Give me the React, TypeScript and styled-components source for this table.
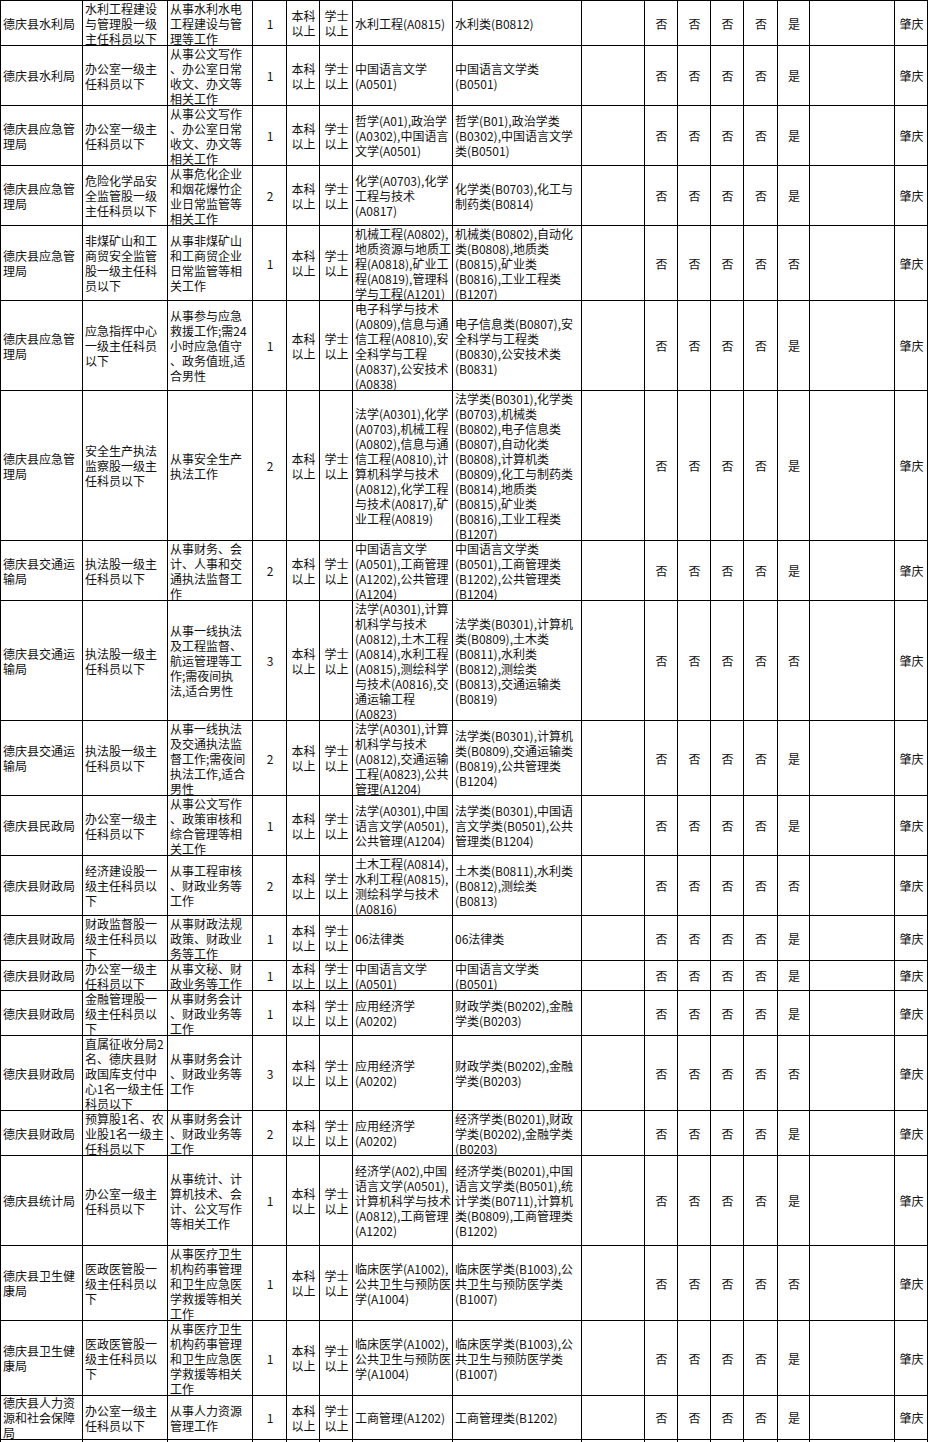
import React from "react";
import styled, { createGlobalStyle } from "styled-components";

const GlobalStyle = createGlobalStyle`
  html, body {
    margin: 0;
    padding: 0;
    background: #fff;
  }
  body {
    font-family: "Noto Sans CJK SC", "Noto Sans", sans-serif;
    color: #111;
  }
`;

// column widths include each cell's right border
const COLS = [82, 85, 85, 34, 33, 33, 100, 129, 63, 33, 33, 33, 34, 32, 85, 33];

interface Job {
  h: number;
  dept: string;
  post: string;
  duty: string;
  count: number;
  major: string;
  bachelor: string;
  flags: string;
}

const jobs: Job[] = [
  {
    h: 45,
    dept: "德庆县水利局",
    post: "水利工程建设|与管理股一级|主任科员以下",
    duty: "从事水利水电|工程建设与管|理等工作",
    count: 1,
    major: "水利工程(A0815)",
    bachelor: "水利类(B0812)",
    flags: "否否否否是",
  },
  {
    h: 60,
    dept: "德庆县水利局",
    post: "办公室一级主|任科员以下",
    duty: "从事公文写作|、办公室日常|收文、办文等|相关工作",
    count: 1,
    major: "中国语言文学|(A0501)",
    bachelor: "中国语言文学类|(B0501)",
    flags: "否否否否是",
  },
  {
    h: 60,
    dept: "德庆县应急管|理局",
    post: "办公室一级主|任科员以下",
    duty: "从事公文写作|、办公室日常|收文、办文等|相关工作",
    count: 1,
    major: "哲学(A01),政治学|(A0302),中国语言|文学(A0501)",
    bachelor: "哲学(B01),政治学类|(B0302),中国语言文学|类(B0501)",
    flags: "否否否否是",
  },
  {
    h: 60,
    dept: "德庆县应急管|理局",
    post: "危险化学品安|全监管股一级|主任科员以下",
    duty: "从事危化企业|和烟花爆竹企|业日常监管等|相关工作",
    count: 2,
    major: "化学(A0703),化学|工程与技术|(A0817)",
    bachelor: "化学类(B0703),化工与|制药类(B0814)",
    flags: "否否否否是",
  },
  {
    h: 75,
    dept: "德庆县应急管|理局",
    post: "非煤矿山和工|商贸安全监管|股一级主任科|员以下",
    duty: "从事非煤矿山|和工商贸企业|日常监管等相|关工作",
    count: 1,
    major: "机械工程(A0802),|地质资源与地质工|程(A0818),矿业工|程(A0819),管理科|学与工程(A1201)",
    bachelor: "机械类(B0802),自动化|类(B0808),地质类|(B0815),矿业类|(B0816),工业工程类|(B1207)",
    flags: "否否否否否",
  },
  {
    h: 90,
    dept: "德庆县应急管|理局",
    post: "应急指挥中心|一级主任科员|以下",
    duty: "从事参与应急|救援工作;需24|小时应急值守|、政务值班,适|合男性",
    count: 1,
    major: "电子科学与技术|(A0809),信息与通|信工程(A0810),安|全科学与工程|(A0837),公安技术|(A0838)",
    bachelor: "电子信息类(B0807),安|全科学与工程类|(B0830),公安技术类|(B0831)",
    flags: "否否否否是",
  },
  {
    h: 150,
    dept: "德庆县应急管|理局",
    post: "安全生产执法|监察股一级主|任科员以下",
    duty: "从事安全生产|执法工作",
    count: 2,
    major: "法学(A0301),化学|(A0703),机械工程|(A0802),信息与通|信工程(A0810),计|算机科学与技术|(A0812),化学工程|与技术(A0817),矿|业工程(A0819)",
    bachelor: "法学类(B0301),化学类|(B0703),机械类|(B0802),电子信息类|(B0807),自动化类|(B0808),计算机类|(B0809),化工与制药类|(B0814),地质类|(B0815),矿业类|(B0816),工业工程类|(B1207)",
    flags: "否否否否是",
  },
  {
    h: 60,
    dept: "德庆县交通运|输局",
    post: "执法股一级主|任科员以下",
    duty: "从事财务、会|计、人事和交|通执法监督工|作",
    count: 2,
    major: "中国语言文学|(A0501),工商管理|(A1202),公共管理|(A1204)",
    bachelor: "中国语言文学类|(B0501),工商管理类|(B1202),公共管理类|(B1204)",
    flags: "否否否否是",
  },
  {
    h: 120,
    dept: "德庆县交通运|输局",
    post: "执法股一级主|任科员以下",
    duty: "从事一线执法|及工程监督、|航运管理等工|作;需夜间执|法,适合男性",
    count: 3,
    major: "法学(A0301),计算|机科学与技术|(A0812),土木工程|(A0814),水利工程|(A0815),测绘科学|与技术(A0816),交|通运输工程|(A0823)",
    bachelor: "法学类(B0301),计算机|类(B0809),土木类|(B0811),水利类|(B0812),测绘类|(B0813),交通运输类|(B0819)",
    flags: "否否否否否",
  },
  {
    h: 75,
    dept: "德庆县交通运|输局",
    post: "执法股一级主|任科员以下",
    duty: "从事一线执法|及交通执法监|督工作;需夜间|执法工作,适合|男性",
    count: 2,
    major: "法学(A0301),计算|机科学与技术|(A0812),交通运输|工程(A0823),公共|管理(A1204)",
    bachelor: "法学类(B0301),计算机|类(B0809),交通运输类|(B0819),公共管理类|(B1204)",
    flags: "否否否否是",
  },
  {
    h: 60,
    dept: "德庆县民政局",
    post: "办公室一级主|任科员以下",
    duty: "从事公文写作|、政策审核和|综合管理等相|关工作",
    count: 1,
    major: "法学(A0301),中国|语言文学(A0501),|公共管理(A1204)",
    bachelor: "法学类(B0301),中国语|言文学类(B0501),公共|管理类(B1204)",
    flags: "否否否否是",
  },
  {
    h: 60,
    dept: "德庆县财政局",
    post: "经济建设股一|级主任科员以|下",
    duty: "从事工程审核|、财政业务等|工作",
    count: 2,
    major: "土木工程(A0814),|水利工程(A0815),|测绘科学与技术|(A0816)",
    bachelor: "土木类(B0811),水利类|(B0812),测绘类|(B0813)",
    flags: "否否否否否",
  },
  {
    h: 45,
    dept: "德庆县财政局",
    post: "财政监督股一|级主任科员以|下",
    duty: "从事财政法规|政策、财政业|务等工作",
    count: 1,
    major: "06法律类",
    bachelor: "06法律类",
    flags: "否否否否是",
  },
  {
    h: 30,
    dept: "德庆县财政局",
    post: "办公室一级主|任科员以下",
    duty: "从事文秘、财|政业务等工作",
    count: 1,
    major: "中国语言文学|(A0501)",
    bachelor: "中国语言文学类|(B0501)",
    flags: "否否否否是",
  },
  {
    h: 45,
    dept: "德庆县财政局",
    post: "金融管理股一|级主任科员以|下",
    duty: "从事财务会计|、财政业务等|工作",
    count: 1,
    major: "应用经济学|(A0202)",
    bachelor: "财政学类(B0202),金融|学类(B0203)",
    flags: "否否否否是",
  },
  {
    h: 75,
    dept: "德庆县财政局",
    post: "直属征收分局2|名、德庆县财|政国库支付中|心1名一级主任|科员以下",
    duty: "从事财务会计|、财政业务等|工作",
    count: 3,
    major: "应用经济学|(A0202)",
    bachelor: "财政学类(B0202),金融|学类(B0203)",
    flags: "否否否否否",
  },
  {
    h: 45,
    dept: "德庆县财政局",
    post: "预算股1名、农|业股1名一级主|任科员以下",
    duty: "从事财务会计|、财政业务等|工作",
    count: 2,
    major: "应用经济学|(A0202)",
    bachelor: "经济学类(B0201),财政|学类(B0202),金融学类|(B0203)",
    flags: "否否否否是",
  },
  {
    h: 90,
    dept: "德庆县统计局",
    post: "办公室一级主|任科员以下",
    duty: "从事统计、计|算机技术、会|计、公文写作|等相关工作",
    count: 1,
    major: "经济学(A02),中国|语言文学(A0501),|计算机科学与技术|(A0812),工商管理|(A1202)",
    bachelor: "经济学类(B0201),中国|语言文学类(B0501),统|计学类(B0711),计算机|类(B0809),工商管理类|(B1202)",
    flags: "否否否否是",
  },
  {
    h: 75,
    dept: "德庆县卫生健|康局",
    post: "医政医管股一|级主任科员以|下",
    duty: "从事医疗卫生|机构药事管理|和卫生应急医|学救援等相关|工作",
    count: 1,
    major: "临床医学(A1002),|公共卫生与预防医|学(A1004)",
    bachelor: "临床医学类(B1003),公|共卫生与预防医学类|(B1007)",
    flags: "否否否否否",
  },
  {
    h: 75,
    dept: "德庆县卫生健|康局",
    post: "医政医管股一|级主任科员以|下",
    duty: "从事医疗卫生|机构药事管理|和卫生应急医|学救援等相关|工作",
    count: 1,
    major: "临床医学(A1002),|公共卫生与预防医|学(A1004)",
    bachelor: "临床医学类(B1003),公|共卫生与预防医学类|(B1007)",
    flags: "否否否否是",
  },
  {
    h: 44,
    dept: "德庆县人力资|源和社会保障|局",
    post: "办公室一级主|任科员以下",
    duty: "从事人力资源|管理工作",
    count: 1,
    major: "工商管理(A1202)",
    bachelor: "工商管理类(B1202)",
    flags: "否否否否是",
  },
];

function Lines({ text }: { text: string }) {
  return (
    <>
      {text.split("|").map((line, i) => (
        <Line key={i}>{line}</Line>
      ))}
    </>
  );
}

export default function App() {
  return (
    <>
      <GlobalStyle />
      <Sheet>
        {jobs.map((job, i) => (
          <Row key={i} $h={job.h}>
            <Cell>
              <Lines text={job.dept} />
            </Cell>
            <Cell>
              <Lines text={job.post} />
            </Cell>
            <Cell>
              <Lines text={job.duty} />
            </Cell>
            <Cell $center>{job.count}</Cell>
            <Cell $center>
              <Lines text="本科|以上" />
            </Cell>
            <Cell $center>
              <Lines text="学士|以上" />
            </Cell>
            <Cell>
              <Lines text={job.major} />
            </Cell>
            <Cell>
              <Lines text={job.bachelor} />
            </Cell>
            <Cell />
            {job.flags.split("").map((f, j) => (
              <Cell key={j} $center>
                {f}
              </Cell>
            ))}
            <Cell />
            <Cell $center>肇庆</Cell>
          </Row>
        ))}
        <Row $h={3} $open>
          {COLS.map((_, j) => (
            <Cell key={j} />
          ))}
        </Row>
      </Sheet>
    </>
  );
}

const Sheet = styled.div`
  width: 928px;
  border-top: 1px solid #000;
`;

const Row = styled.div<{ $h: number; $open?: boolean }>`
  display: grid;
  grid-template-columns: ${COLS.map((w) => `${w}px`).join(" ")};
  height: ${(p) => p.$h}px;
  border-left: 1px solid #000;

  & > div {
    border-bottom: ${(p) => (p.$open ? "none" : "1px solid #000")};
  }
`;

const Cell = styled.div<{ $center?: boolean }>`
  box-sizing: border-box;
  display: flex;
  flex-direction: column;
  justify-content: center;
  align-items: ${(p) => (p.$center ? "center" : "flex-start")};
  padding: 0 1px 0 2px;
  overflow: hidden;
  border-right: 1px solid #000;
  font-size: 12px;
  line-height: 15px;
  white-space: nowrap;
`;

const Line = styled.div`
  flex-shrink: 0;
`;
